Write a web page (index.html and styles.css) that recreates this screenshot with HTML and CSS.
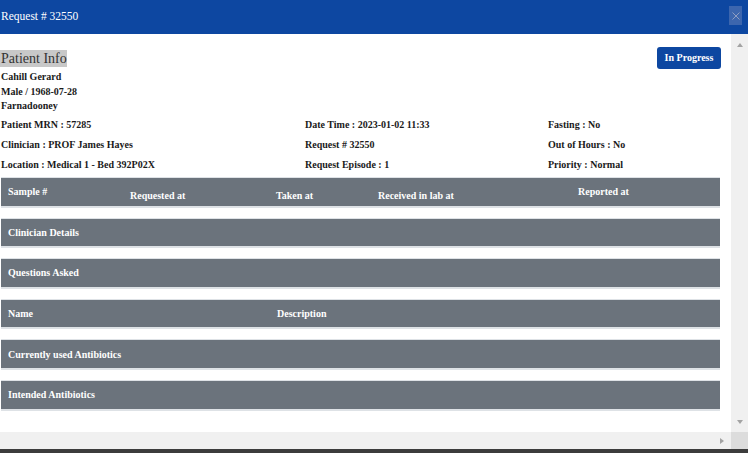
FILE: index.html
```html
<!DOCTYPE html>
<html>
<head>
<meta charset="utf-8">
<link rel="stylesheet" href="styles.css">
</head>
<body>
<div class="modal">
  <div class="header">
    <div class="title">Request # 32550</div>
    <div class="close">
      <svg width="8" height="8" viewBox="0 0 8 8"><path d="M0.5 0.5 L7.5 7.5 M7.5 0.5 L0.5 7.5" stroke="#8f9ec2" stroke-width="1" fill="none"/></svg>
    </div>
  </div>
  <div class="body">
    <div class="content">
      <div class="top">
        <div class="patient">
          <div class="pi-title">Patient Info</div>
          <div class="names">
            <div>Cahill Gerard</div>
            <div>Male / 1968-07-28</div>
            <div>Farnadooney</div>
          </div>
        </div>
        <div class="status">In Progress</div>
      </div>
      <div class="info">
        <div>Patient MRN : 57285</div>
        <div>Date Time : 2023-01-02 11:33</div>
        <div>Fasting : No</div>
        <div>Clinician : PROF James Hayes</div>
        <div>Request # 32550</div>
        <div>Out of Hours : No</div>
        <div>Location : Medical 1 - Bed 392P02X</div>
        <div>Request Episode : 1</div>
        <div>Priority : Normal</div>
      </div>
      <div class="bar first">
        <div class="c c1">Sample #</div>
        <div class="c c2 low">Requested at</div>
        <div class="c c3 low">Taken at</div>
        <div class="c c4 low">Received in lab at</div>
        <div class="c c5">Reported at</div>
      </div>
      <div class="bar"><div class="c">Clinician Details</div></div>
      <div class="bar"><div class="c">Questions Asked</div></div>
      <div class="bar">
        <div class="c n1">Name</div>
        <div class="c n2">Description</div>
      </div>
      <div class="bar"><div class="c">Currently used Antibiotics</div></div>
      <div class="bar"><div class="c">Intended Antibiotics</div></div>
    </div>
    <div class="vscroll">
      <div class="arrow-up"></div>
      <div class="arrow-down"></div>
    </div>
  </div>
  <div class="hrow">
    <div class="htrack"><div class="arrow-right"></div></div>
    <div class="corner"></div>
  </div>
  <div class="taskbar"></div>
</div>
</body>
</html>
```

FILE: styles.css
```css
* { box-sizing: border-box; }
html, body { margin: 0; padding: 0; }
body {
  width: 748px;
  height: 453px;
  overflow: hidden;
  background: #fff;
  font-family: "Liberation Serif", "Times New Roman", serif;
}
.modal {
  display: flex;
  flex-direction: column;
  width: 748px;
  height: 453px;
}
.header {
  height: 34px;
  background: #0d47a1;
  display: flex;
  align-items: flex-start;
  color: #fff;
}
.title {
  font-size: 11.5px;
  line-height: 14px;
  padding: 9px 0 0 1px;
}
.close {
  margin-left: auto;
  margin-right: 6px;
  margin-top: 6px;
  width: 13px;
  height: 19px;
  background: #3c66ae;
  display: flex;
  align-items: center;
  justify-content: center;
}
.close svg { display: block; }
.body {
  height: 398px;
  display: flex;
}
.content {
  flex: 1;
  padding: 13px 11px 0 1px;
  color: #1a1a1a;
  font-size: 10px;
  font-weight: bold;
  overflow: hidden;
}
.top {
  display: flex;
  justify-content: space-between;
  align-items: flex-start;
}
.pi-title {
  display: inline-block;
  margin-top: 3px;
  margin-left: -1px;
  padding-left: 1px;
  width: 67px;
  height: 17px;
  line-height: 17px;
  background: #c8c8c8;
  font-size: 14px;
  font-weight: normal;
  color: #333;
}
.names {
  margin-top: 3px;
  line-height: 14.5px;
}
.status {
  width: 64px;
  height: 22px;
  margin-right: -1px;
  background: #0d47a1;
  color: #fff;
  border-radius: 3px;
  font-size: 10px;
  line-height: 22px;
  text-align: center;
}
.info {
  margin-top: 1.5px;
  display: grid;
  grid-template-columns: 304px 243px auto;
  line-height: 20px;
}
.bar {
  display: flex;
  align-items: center;
  height: 30.6px;
  background: #6b737c;
  border-top: 1px solid #dee2e6;
  border-bottom: 2px solid #dee2e6;
  margin-bottom: 10px;
  color: #fff;
  font-size: 10px;
}
.bar.first { margin-top: 2px; }
.c { padding-left: 7px; }
.c.low { padding-top: 7px; }
.c1 { width: 122px; }
.c2 { width: 146px; }
.c3 { width: 102px; }
.c4 { width: 200px; }
.c5 { width: 149px; }
.n1 { width: 269px; }
.n2 { flex: 1; }
.vscroll {
  width: 17px;
  background: #f0f0f0;
  display: flex;
  flex-direction: column;
  justify-content: space-between;
  align-items: center;
  padding: 9px 0 8px 0;
}
.arrow-up {
  width: 0; height: 0;
  border-left: 3.5px solid transparent;
  border-right: 3.5px solid transparent;
  border-bottom: 4px solid #a3a3a3;
}
.arrow-down {
  width: 0; height: 0;
  border-left: 3.5px solid transparent;
  border-right: 3.5px solid transparent;
  border-top: 4px solid #a3a3a3;
}
.hrow {
  height: 17px;
  display: flex;
}
.htrack {
  flex: 1;
  background: #f0f0f0;
  display: flex;
  align-items: center;
  justify-content: flex-end;
  padding-right: 7px;
}
.arrow-right {
  width: 0; height: 0;
  border-top: 3.5px solid transparent;
  border-bottom: 3.5px solid transparent;
  border-left: 4px solid #a3a3a3;
}
.corner {
  width: 17px;
  background: #dcdcdc;
}
.taskbar {
  height: 4px;
  background: #3c3c3c;
}
```
